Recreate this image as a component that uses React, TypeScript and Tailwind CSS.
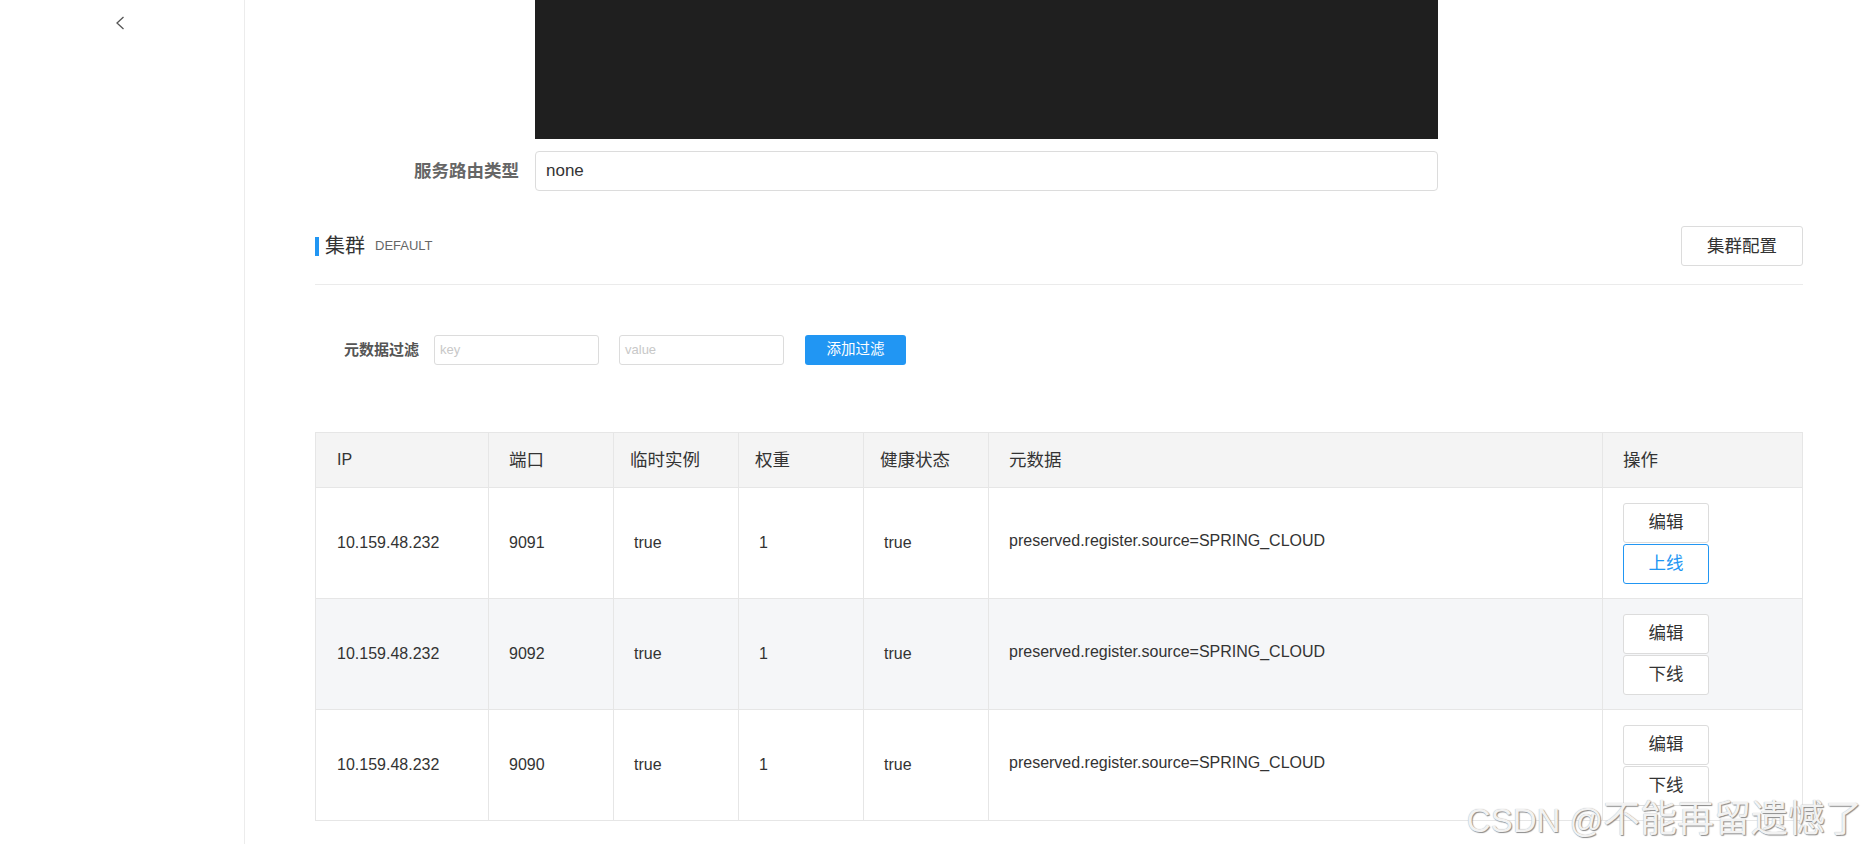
import React from "react";

const latin = "font-['Liberation_Sans','Noto_Sans_CJK_SC',sans-serif]";

const rows = [
  { ip: "10.159.48.232", port: "9091", eph: "true", weight: "1", healthy: "true", online: false },
  { ip: "10.159.48.232", port: "9092", eph: "true", weight: "1", healthy: "true", online: true },
  { ip: "10.159.48.232", port: "9090", eph: "true", weight: "1", healthy: "true", online: true },
];

function Btn({ children, primary }: { children: React.ReactNode; primary?: boolean }) {
  return (
    <div
      className={
        "flex h-[40px] w-[86px] items-center justify-center rounded-[3px] border bg-white text-[17.5px] " +
        (primary ? "border-[#2196f3] text-[#2196f3]" : "border-[#dcdcdc] text-[#333]")
      }
    >
      {children}
    </div>
  );
}

export default function App() {
  return (
    <div className={"relative flex h-[844px] w-[1870px] overflow-hidden bg-white text-[#333] " + latin}>
      <aside className="w-[245px] shrink-0 border-r border-[#ececec] pl-[115px] pt-[16px]">
        <svg width="10" height="14" viewBox="0 0 10 14" fill="none">
          <path d="M8.5 1 L2 7 L8.5 13" stroke="#555" strokeWidth="1.3" />
        </svg>
      </aside>

      <main className="flex-1 pl-[70px] pr-[67px]">
        <div className="flex">
          <div className="w-[220px] shrink-0" />
          <div className="h-[139px] w-[903px] bg-[#1f1f1f]" />
        </div>

        <div className="mt-[12px] flex items-center">
          <div className="w-[205px] shrink-0 pr-[1px] text-right text-[17.5px] font-bold text-[#666]">服务路由类型</div>
          <div className="ml-[15px] flex h-[40px] w-[903px] items-center rounded-[4px] border border-[#dcdcdc] px-[10px] text-[17px] text-[#333]">
            none
          </div>
        </div>

        <div className="mt-[35px] flex h-[40px] items-center justify-between">
          <div className="flex items-center">
            <div className="h-[19px] w-[4px] bg-[#2196f3]" />
            <span className="ml-[6px] text-[20px] text-[#333]">集群</span>
            <span className="ml-[10px] text-[13px] text-[#666]">DEFAULT</span>
          </div>
          <div className="flex h-[40px] w-[122px] items-center justify-center rounded-[3px] border border-[#dcdcdc] text-[17.5px] text-[#333]">
            集群配置
          </div>
        </div>

        <div className="mt-[18px] border-t border-[#ebebeb]" />

        <div className="mt-[50px] flex h-[30px] items-center pl-[29px]">
          <span className="text-[15px] font-semibold text-[#555]">元数据过滤</span>
          <div className="ml-[15px] flex h-[30px] w-[165px] items-center rounded-[3px] border border-[#dcdcdc] px-[5px] text-[13px] text-[#c8c8c8]">
            key
          </div>
          <div className="ml-[20px] flex h-[30px] w-[165px] items-center rounded-[3px] border border-[#dcdcdc] px-[5px] text-[13px] text-[#c8c8c8]">
            value
          </div>
          <div className="ml-[21px] flex h-[30px] w-[101px] items-center justify-center rounded-[3px] bg-[#2196f3] text-[14.5px] text-white">
            添加过滤
          </div>
        </div>

        <table className="mt-[67px] w-[1487px] table-fixed border-collapse border border-[#e6e6e6] text-[16px] text-[#333]">
          <colgroup>
            <col className="w-[173px]" />
            <col className="w-[125px]" />
            <col className="w-[125px]" />
            <col className="w-[125px]" />
            <col className="w-[125px]" />
            <col className="w-[614px]" />
            <col className="w-[200px]" />
          </colgroup>
          <thead>
            <tr className="h-[55px] bg-[#f4f4f4] text-left">
              <th className="border border-[#e6e6e6] pl-[21px] text-[16px] font-normal">IP</th>
              <th className="border border-[#e6e6e6] pl-[20px] text-[17.5px] font-normal">端口</th>
              <th className="border border-[#e6e6e6] pl-[16px] text-[17.5px] font-normal">临时实例</th>
              <th className="border border-[#e6e6e6] pl-[16px] text-[17.5px] font-normal">权重</th>
              <th className="border border-[#e6e6e6] pl-[16px] text-[17.5px] font-normal">健康状态</th>
              <th className="border border-[#e6e6e6] pl-[20px] text-[17.5px] font-normal">元数据</th>
              <th className="border border-[#e6e6e6] pl-[20px] text-[17.5px] font-normal">操作</th>
            </tr>
          </thead>
          <tbody>
            {rows.map((r, i) => (
              <tr key={i} className={"h-[111px] " + (i === 1 ? "bg-[#f5f6f8]" : "bg-white")}>
                <td className="border border-[#e6e6e6] pl-[21px]">{r.ip}</td>
                <td className="border border-[#e6e6e6] pl-[20px]">{r.port}</td>
                <td className="border border-[#e6e6e6] pl-[20px]">{r.eph}</td>
                <td className="border border-[#e6e6e6] pl-[20px]">{r.weight}</td>
                <td className="border border-[#e6e6e6] pl-[20px]">{r.healthy}</td>
                <td className="border border-[#e6e6e6] pl-[20px]">
                  <div className="-mt-[4px]">preserved.register.source=SPRING_CLOUD</div>
                </td>
                <td className="border border-[#e6e6e6] pl-[20px]">
                  <div className="flex flex-col gap-[1px]">
                    <Btn>编辑</Btn>
                    <Btn primary={!r.online}>{r.online ? "下线" : "上线"}</Btn>
                  </div>
                </td>
              </tr>
            ))}
          </tbody>
        </table>
      </main>

      <div className="pointer-events-none absolute right-[8px] top-[792px] flex items-baseline whitespace-nowrap text-[#f2f2f2] [text-shadow:1px_1px_1px_#8a8a8a,0_0_1px_#aaa]">
        <span className="text-[33px]">CSDN @</span>
        <span className="text-[37px]">不能再留遗憾了</span>
      </div>
    </div>
  );
}
